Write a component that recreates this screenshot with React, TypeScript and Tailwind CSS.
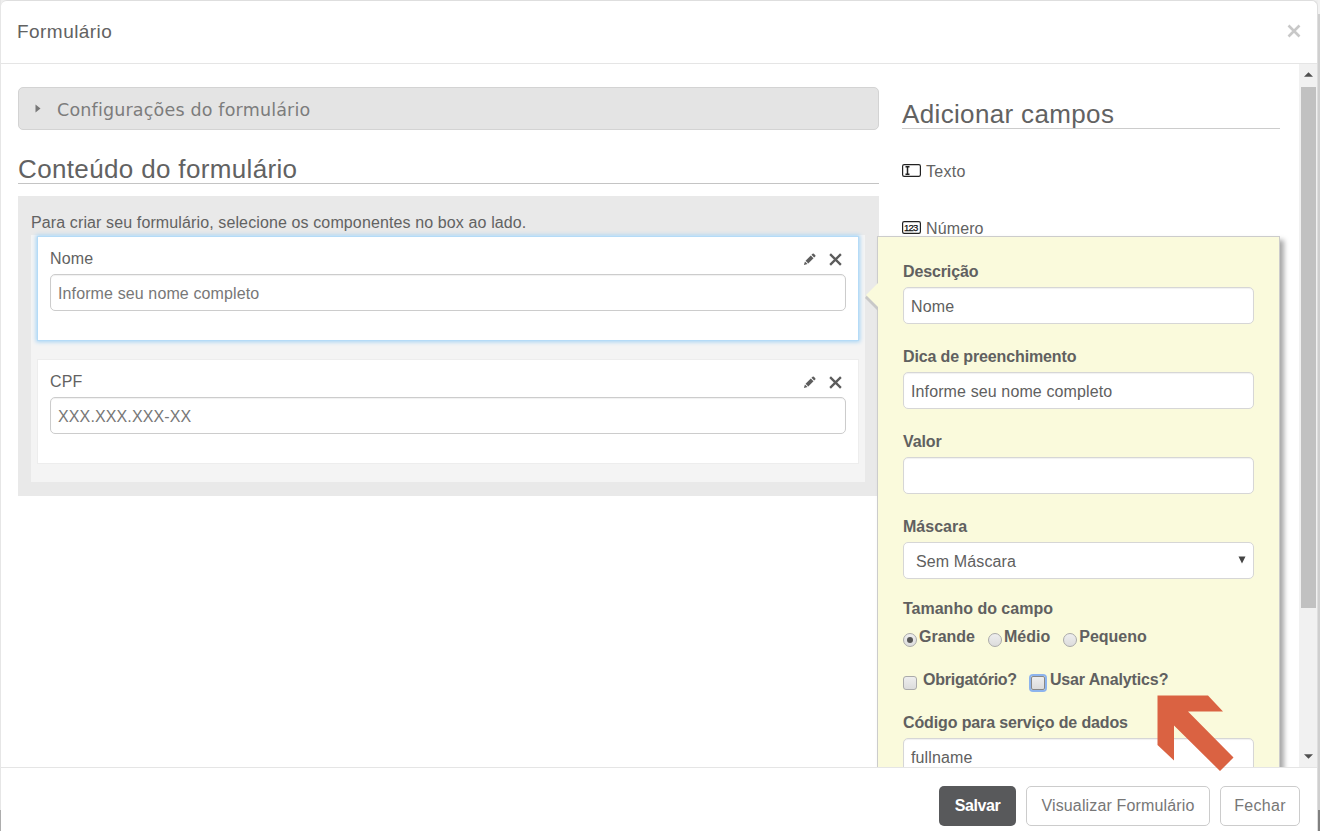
import React from 'react'

interface FieldCardProps {
  label: string
  placeholder: string
  active?: boolean
}

interface TextGroupProps {
  label: string
  value: string
}

const PencilIcon = () => (
  <svg viewBox="0 0 14 14" className="h-[13px] w-[13px]" fill="#5c5c5c">
    <path d="M1 13l1.1-3.9 2.8 2.8z" />
    <path d="M2.8 8.3l5.6-5.6 2.9 2.9-5.6 5.6z" />
    <path d="M9.1 2l1.2-1.2a1 1 0 0 1 1.4 0l1.5 1.5a1 1 0 0 1 0 1.4L12 4.9z" />
  </svg>
)

const RemoveIcon = () => (
  <svg viewBox="0 0 14 14" className="h-[13px] w-[13px]" stroke="#5c5c5c" strokeWidth="2.5" fill="none">
    <path d="M1.2 1.2l11.600 11.600M12.800 1.200l-11.600 11.600" />
  </svg>
)

const TextFieldIcon = () => (
  <svg viewBox="0 0 19 13" className="h-[13px] w-[19px]" fill="none" stroke="#222">
    <rect x="0.6" y="0.6" width="17.8" height="11.8" rx="1.6" strokeWidth="1.2" />
    <path d="M3.5 2.7h4M3.5 10.3h4M5.5 2.7v7.6" strokeWidth="1.5" />
  </svg>
)

const NumberFieldIcon = () => (
  <svg viewBox="0 0 19 13" className="h-[13px] w-[19px]">
    <rect x="0.6" y="0.6" width="17.8" height="11.8" rx="1.6" fill="none" stroke="#222" strokeWidth="1.2" />
    <text x="2" y="9.9" fontSize="9.5" textLength="14.5" fill="#111" stroke="#111" strokeWidth="0.25" fontFamily="Liberation Sans, sans-serif">123</text>
  </svg>
)

function FieldCard({ label, placeholder, active }: FieldCardProps) {
  return (
    <div
      className={`h-[105px] border bg-white px-3 pt-[11px] ${
        active
          ? 'border-[#b5dbf7] shadow-[0_0_4px_1px_#a5d3f5]'
          : 'border-[#ededed]'
      }`}
    >
      <div className="flex h-[22px] items-center justify-between">
        <span>{label}</span>
        <div className="flex items-center gap-[13px] pr-1">
          <PencilIcon />
          <RemoveIcon />
        </div>
      </div>
      <div className="mt-1 flex h-[37px] items-center rounded-[5px] border border-[#ccc] pl-[7px] pt-[3px] text-[#777] shadow-[inset_0_1px_1px_rgba(0,0,0,0.06)]">
        {placeholder}
      </div>
    </div>
  )
}

function TextGroup({ label, value }: TextGroupProps) {
  return (
    <div className="mb-[22px]">
      <div className="h-[22px] font-bold leading-[22px] tracking-[-0.13px]">{label}</div>
      <div className="mt-1 flex h-[37px] items-center rounded-[5px] border border-[#d6d6d6] bg-white pl-[7px] pt-[3px] shadow-[inset_0_1px_1px_rgba(0,0,0,0.06)]">
        {value}
      </div>
    </div>
  )
}

function Radio({ label, checked }: { label: string; checked?: boolean }) {
  return (
    <div className="flex items-center">
      <span className="mt-[5px] flex h-[14px] w-[14px] items-center justify-center rounded-full border border-[#aaa] bg-linear-to-b from-[#eee] to-[#dcdcdc]">
        {checked && <span className="h-[6px] w-[6px] rounded-full bg-[#555]" />}
      </span>
      <span className="ml-[2px]">{label}</span>
    </div>
  )
}

function FieldPopover() {
  return (
    <div className="absolute left-[-25px] top-[148px] h-[620px] w-[403px] border border-[#ccc] bg-[#fafadc] px-[25px] pt-6 text-[#606060] shadow-[4px_4px_5px_rgba(0,0,0,0.35)]">
      <svg className="absolute left-[-13px] top-[45px] h-[31px] w-[14px]" viewBox="0 0 14 31">
        <path d="M0 16L13 29V20L3 12Z" fill="#c8c8c8" />
        <path d="M1 13L14 0V26Z" fill="#fafadc" />
      </svg>
      <TextGroup label="Descrição" value="Nome" />
      <TextGroup label="Dica de preenchimento" value="Informe seu nome completo" />
      <TextGroup label="Valor" value="" />
      <div className="mb-[18px]">
        <div className="h-[22px] font-bold leading-[22px] tracking-normal">Máscara</div>
        <div className="mt-1 flex h-[37px] items-center justify-between rounded-[5px] border border-[#d6d6d6] bg-white pl-3 pr-[7px] pt-[3px]">
          <span>Sem Máscara</span>
          <svg viewBox="0 0 8 8" className="mb-[5px] h-[8px] w-[8px]" fill="#444">
            <path d="M0.5 0.5h7L4 7.5z" />
          </svg>
        </div>
      </div>
      <div className="font-bold leading-[22px] tracking-normal">
        <div className="relative top-px">Tamanho do campo</div>
        <div className="mt-[7px] flex h-[22px] items-center gap-[13px]">
          <Radio label="Grande" checked />
          <Radio label="Médio" />
          <Radio label="Pequeno" />
        </div>
        <div className="mt-[21px] flex h-[22px] items-center">
          <span className="mt-[6px] h-[14px] w-[14px] rounded-[3px] border border-[#aaa] bg-linear-to-b from-[#eee] to-[#dcdcdc]" />
          <span className="ml-[6px] tracking-[-0.25px]">Obrigatório?</span>
          <span className="ml-[14px] mt-[6px] h-[14px] w-[14px] rounded-[2px] border border-[#888] bg-linear-to-b from-[#eee] to-[#dcdcdc] ring-2 ring-[#8db4ee]" />
          <span className="ml-[5px] tracking-[-0.13px]">Usar Analytics?</span>
        </div>
      </div>
      <div className="mt-[21px]">
        <TextGroup label="Código para serviço de dados" value="fullname" />
      </div>
    </div>
  )
}

export default function App() {
  return (
    <div className="relative flex h-[831px] w-[1320px] overflow-hidden bg-[#eee] font-['Liberation_Sans',Arial,sans-serif] text-[16px] tracking-[0.12px] text-[#626262]">
      {/* Page edge behind the modal */}
      <div className="flex w-px flex-col justify-end bg-[#e6e6e6]">
        <div className="h-[21px] bg-[#adadad]" />
      </div>

      <div className="flex w-[1317px] flex-col rounded-t-[6px] border border-b-0 border-l-0 border-[#dedede] bg-white">
        {/* Header */}
        <div className="flex h-[63px] shrink-0 items-center justify-between border-b border-[#e5e5e5] pl-4 pr-4">
          <h4 className="text-[19px] tracking-[0.45px]">Formulário</h4>
          <svg viewBox="0 0 14 14" className="mb-[3px] h-[14px] w-[14px]" stroke="#c8c8c8" strokeWidth="2.6">
            <path d="M1.5 1.5l11 11M12.5 1.5l-11 11" />
          </svg>
        </div>

        {/* Body */}
        <div className="flex h-[703px] shrink-0 overflow-hidden">
          <div className="w-[878px] shrink-0 pl-[17px] pt-[23px]">
            <div className="flex h-[43px] items-center rounded-[5px] border border-[#d3d3d3] bg-[#e4e4e4] pl-4">
              <svg viewBox="0 0 6 9" className="h-[9px] w-[6px]" fill="#777">
                <path d="M0.5 0.5v8l5-4z" />
              </svg>
              <span className="ml-[16px] pt-[3px] font-['DejaVu_Sans',sans-serif] text-[17.5px] tracking-[0.18px] text-[#7c7c7c]">Configurações do formulário</span>
            </div>
            <h3 className="mt-[23px] h-[31px] border-b border-[#c4c4c4] text-[26px] leading-[32px] tracking-[0.35px]">Conteúdo do formulário</h3>
            <div className="mt-3 h-[300px] bg-[#e9e9e9] px-[13px] pt-4">
              <p className="h-[23px] leading-[22px]">Para criar seu formulário, selecione os componentes no box ao lado.</p>
              <div className="flex h-[247px] w-[834px] flex-col gap-[18px] bg-[#f4f4f4] px-[6px] pt-[1px]">
                <FieldCard label="Nome" placeholder="Informe seu nome completo" active />
                <FieldCard label="CPF" placeholder="XXX.XXX.XXX-XX" />
              </div>
            </div>
          </div>

          <div className="relative ml-[23px] mt-6 w-[378px] shrink-0">
            <h3 className="h-[41px] border-b border-[#ccc] pt-[10px] text-[26px] leading-[32px] tracking-[0.35px]">Adicionar campos</h3>
            <div className="mt-[30px] flex h-[22px] items-center gap-[5px]">
              <TextFieldIcon />
              <span className="pt-[3px] tracking-[0.3px]">Texto</span>
            </div>
            <div className="mt-[35px] flex h-[22px] items-center gap-[5px]">
              <NumberFieldIcon />
              <span className="pt-[3px]">Número</span>
            </div>
            <FieldPopover />
          </div>

          {/* Scrollbar */}
          <div className="ml-auto flex w-[18px] flex-col items-center bg-[#f1f1f1]">
            <svg viewBox="0 0 10 5" className="mt-2 h-[5px] w-[9px]" fill="#505050">
              <path d="M0 5L5 0l5 5z" />
            </svg>
            <div className="mt-[10px] h-[521px] w-[15px] bg-[#c1c1c1]" />
            <svg viewBox="0 0 10 5" className="mb-[8px] mt-auto h-[5px] w-[9px]" fill="#505050">
              <path d="M0 0l5 5 5-5z" />
            </svg>
          </div>
        </div>

        {/* Footer */}
        <div className="flex flex-1 items-start justify-end gap-[10px] border-t border-[#e5e5e5] pr-[17px] pt-[18px]">
          <button className="h-[40px] w-[77px] rounded-[5px] bg-[#58595b] font-bold tracking-[-0.4px] text-white">Salvar</button>
          <button className="h-[40px] w-[184px] rounded-[5px] border border-[#ccc] tracking-[0.15px] text-[#777]">Visualizar Formulário</button>
          <button className="h-[40px] w-[80px] rounded-[5px] border border-[#ccc] tracking-[0.3px] text-[#777]">Fechar</button>
        </div>
      </div>

      <div className="flex w-[2px] flex-col bg-[#cfcfcf]">
        <div className="h-[14px] bg-[#f1f1f1]" />
        <div className="mt-auto h-[21px] bg-[#808080]" />
      </div>

      {/* Callout arrow over the analytics option */}
      <svg className="absolute left-[1156px] top-[694px] h-[78px] w-[79px]" viewBox="0 0 79 78">
        <path d="M1.5 1.5H52L67 17.5H32L77.5 63.5 64 77 18 31.5V66.5L1.5 51Z" fill="#da6242" />
      </svg>
    </div>
  )
}
